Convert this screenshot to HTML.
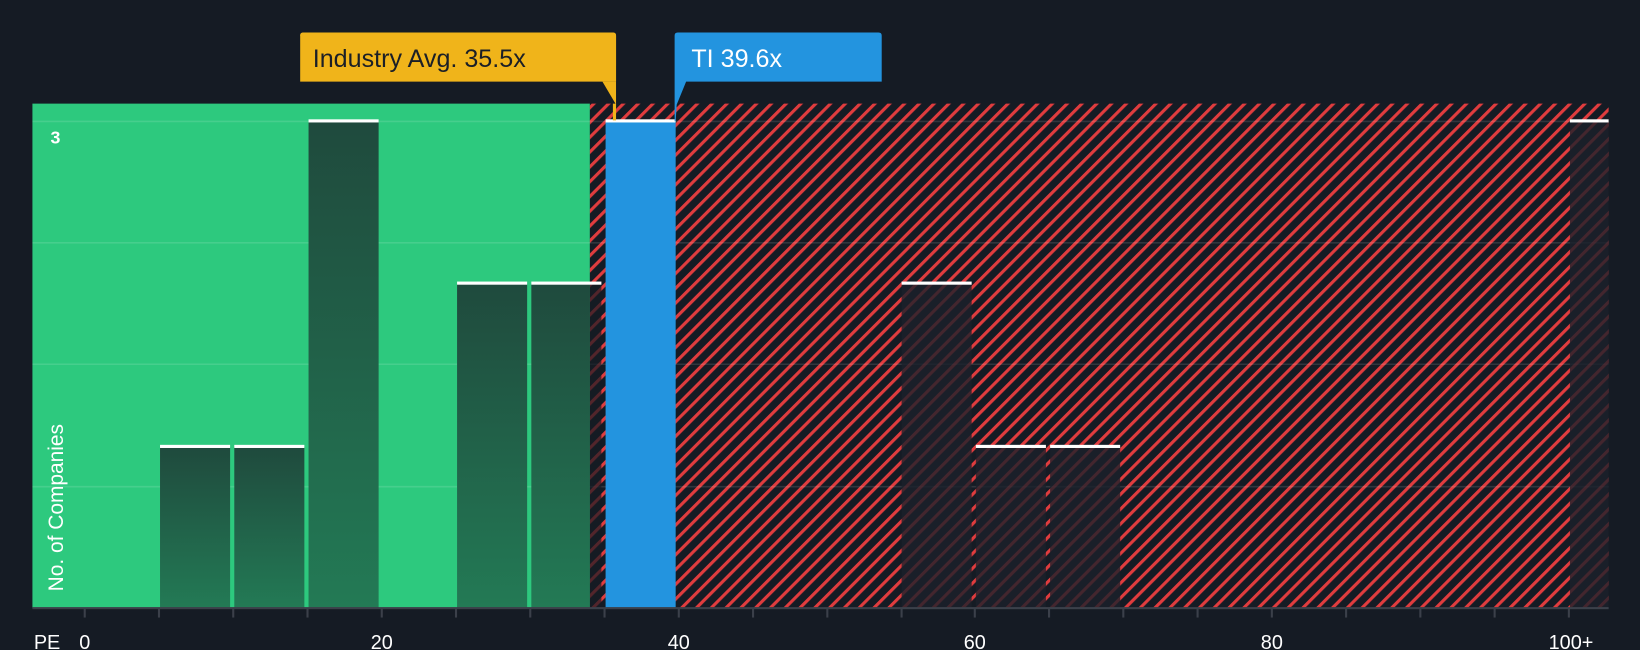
<!DOCTYPE html>
<html><head><meta charset="utf-8"><style>
html,body{margin:0;padding:0;background:#151b24;width:1640px;height:650px;overflow:hidden}
svg{display:block}
text{font-family:"Liberation Sans",sans-serif}
</style></head><body>
<svg width="1640" height="650" viewBox="0 0 1568 621" preserveAspectRatio="none" xmlns="http://www.w3.org/2000/svg">
<defs>
<pattern id="h" patternUnits="userSpaceOnUse" width="10" height="10" patternTransform="rotate(45)">
<rect width="10" height="10" fill="#151b24"/>
<rect x="0" y="0" width="3" height="10" fill="#e03c3e"/>
</pattern>
<linearGradient id="g" x1="0" y1="0" x2="0" y2="1">
<stop offset="0" stop-color="#1f4a3d"/><stop offset="1" stop-color="#237a55"/>
</linearGradient>
</defs>
<rect width="1568" height="621" fill="#151b24"/>
<rect x="31" y="99" width="533" height="482" fill="#2dc97e"/>
<rect x="564" y="99" width="974" height="482" fill="url(#h)"/>
<g stroke="#ffffff" stroke-opacity="0.12" stroke-width="1.5">
<line x1="31" y1="116" x2="1538" y2="116"/><line x1="31" y1="232" x2="1538" y2="232"/>
<line x1="31" y1="348" x2="1538" y2="348"/><line x1="31" y1="465" x2="1538" y2="465"/>
</g>
<g fill="url(#g)">
<rect x="153" y="427" width="67" height="154"/><rect x="224" y="427" width="67" height="154"/>
<rect x="295" y="116" width="67" height="465"/><rect x="437" y="271" width="67" height="310"/>
<rect x="508" y="271" width="56" height="310"/>
</g>
<rect x="564" y="271" width="11" height="310" fill="#151b24" fill-opacity="0.7"/>
<rect x="579" y="116" width="67" height="465" fill="#2394df"/>
<g fill="#1c212b" fill-opacity="0.8">
<rect x="862" y="271" width="67" height="310"/><rect x="933" y="427" width="67" height="154"/>
<rect x="1004" y="427" width="67" height="154"/><rect x="1501" y="116" width="37" height="465"/>
</g>
<g fill="#ffffff">
<rect x="153" y="425" width="67" height="3"/><rect x="224" y="425" width="67" height="3"/>
<rect x="295" y="114" width="67" height="3"/><rect x="437" y="269" width="67" height="3"/>
<rect x="508" y="269" width="67" height="3"/><rect x="579" y="114" width="67" height="3"/>
<rect x="862" y="269" width="67" height="3"/><rect x="933" y="425" width="67" height="3"/>
<rect x="1004" y="425" width="67" height="3"/><rect x="1501" y="114" width="37" height="3"/>
</g>
<rect x="31" y="580" width="1507" height="2" fill="#3b404a"/>
<g stroke="#3b404a" stroke-width="2">
<line x1="81" y1="581" x2="81" y2="590"/><line x1="152" y1="581" x2="152" y2="590"/><line x1="223" y1="581" x2="223" y2="590"/>
<line x1="294" y1="581" x2="294" y2="590"/><line x1="365" y1="581" x2="365" y2="590"/><line x1="436" y1="581" x2="436" y2="590"/>
<line x1="507" y1="581" x2="507" y2="590"/><line x1="578" y1="581" x2="578" y2="590"/><line x1="649" y1="581" x2="649" y2="590"/>
<line x1="720" y1="581" x2="720" y2="590"/><line x1="791" y1="581" x2="791" y2="590"/><line x1="862" y1="581" x2="862" y2="590"/>
<line x1="932" y1="581" x2="932" y2="590"/><line x1="1003" y1="581" x2="1003" y2="590"/><line x1="1074" y1="581" x2="1074" y2="590"/>
<line x1="1145" y1="581" x2="1145" y2="590"/><line x1="1216" y1="581" x2="1216" y2="590"/><line x1="1287" y1="581" x2="1287" y2="590"/>
<line x1="1358" y1="581" x2="1358" y2="590"/><line x1="1429" y1="581" x2="1429" y2="590"/><line x1="1500" y1="581" x2="1500" y2="590"/>
</g>
<g fill="#ffffff" font-size="19" text-anchor="middle">
<text x="45" y="620">PE</text><text x="81" y="620">0</text><text x="365" y="620">20</text>
<text x="649" y="620">40</text><text x="932" y="620">60</text><text x="1216" y="620">80</text><text x="1502" y="620">100+</text>
</g>
<text x="53" y="137" fill="#ffffff" font-size="17" font-weight="bold" text-anchor="middle">3</text>
<text transform="translate(60,565) rotate(-90)" fill="#ffffff" font-size="20">No. of Companies</text>
<path d="M287,34 Q287,31 290,31 H586 Q589,31 589,34 V78 Z" fill="#f0b41a"/>
<path d="M287,34 Q287,31 290,31 H586 Q589,31 589,34 V78 H287 Z" fill="#f0b41a"/>
<path d="M576,78 H589 V100 Z" fill="#f0b41a"/>
<rect x="586" y="99" width="3" height="16" fill="#f0b41a"/>
<text x="299" y="64" fill="#1b1f27" font-size="24">Industry Avg. 35.5x</text>
<path d="M648,31 H840 Q843,31 843,34 V78 H656 L647,100 L646,116 L645,116 L645,34 Q645,31 648,31 Z" fill="#2394df"/>
<text x="661" y="64" fill="#ffffff" font-size="24">TI 39.6x</text>
</svg>
</body></html>
